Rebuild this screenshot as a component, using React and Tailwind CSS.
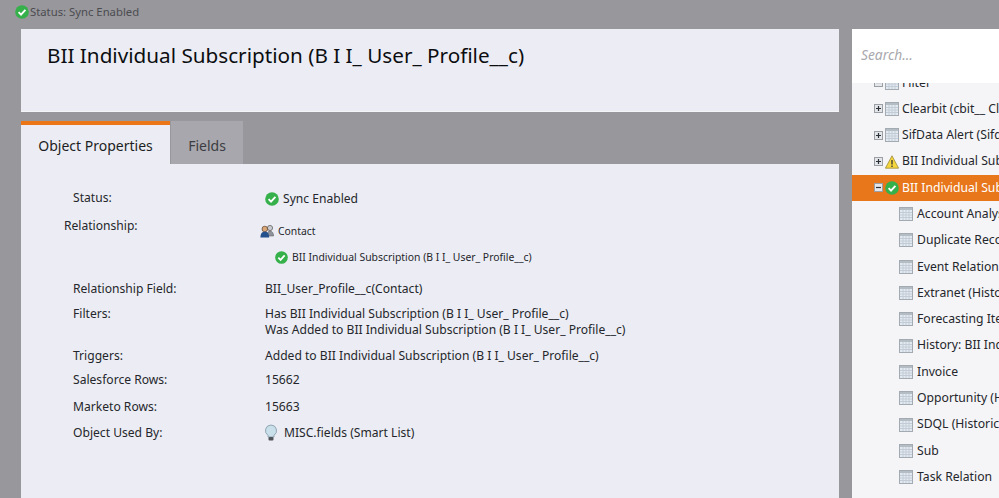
import React from 'react';

const font = { fontFamily: '"Noto Sans", "Open Sans", sans-serif' };

const CheckIcon = ({ size = 14 }) => (
  <svg width={size} height={size} viewBox="0 0 14 14" className="shrink-0">
    <circle cx="7" cy="7" r="6.8" fill="#35b04a" />
    <path d="M3.6 7.2 L6 9.6 L10.4 4.8" fill="none" stroke="#fff" strokeWidth="1.9" />
  </svg>
);

const GridIcon = () => (
  <svg width="14" height="14" viewBox="0 0 14 14" className="shrink-0">
    <rect x="0.5" y="0.5" width="13" height="13" fill="#e3e9f0" stroke="#a3aab2" />
    <rect x="1" y="1" width="12" height="2" fill="#b4bcc4" />
    <path d="M1 5.5H13M1 8H13M1 10.5H13M4 3V13M7 3V13M10 3V13" stroke="#c3ccd6" strokeWidth="1" fill="none" />
  </svg>
);

const Expander = ({ open }) => (
  <svg width="9" height="9" viewBox="0 0 9 9" className="shrink-0">
    <rect x="0.5" y="0.5" width="8" height="8" fill="#e4e6ea" stroke="#9a9ea5" />
    <path d={open ? 'M2 4.5H7' : 'M2 4.5H7M4.5 2V7'} stroke="#2d3138" strokeWidth="1.2" fill="none" />
  </svg>
);

const WarnIcon = () => (
  <svg width="14" height="14" viewBox="0 0 14 14" className="shrink-0">
    <path d="M7 0.8 L13.6 13.2 H0.4 Z" fill="#f5d63d" stroke="#9a8a3a" strokeWidth="0.8" />
    <path d="M7 5V9.5M7 10.5V12" stroke="#333" strokeWidth="1.3" fill="none" />
  </svg>
);

const ContactIcon = () => (
  <svg width="14" height="14" viewBox="0 0 14 14" className="shrink-0">
    <circle cx="10" cy="4" r="2.6" fill="#c9ccd2" stroke="#555" strokeWidth="0.7" />
    <path d="M7 12c0-3 1-5 3-5s3.6 2 3.6 5z" fill="#8f949c" stroke="#555" strokeWidth="0.5" />
    <circle cx="4.8" cy="5" r="2.8" fill="#d9a679" stroke="#5a4128" strokeWidth="0.7" />
    <path d="M0.4 13.5c0-4 1.6-6 4.4-6s4.4 2 4.4 6z" fill="#24508c" />
  </svg>
);

const BulbIcon = () => (
  <svg width="14" height="18" viewBox="0 0 14 18" className="shrink-0">
    <path d="M7 1a5.6 5.6 0 0 0-3 10.3V13h6v-1.7A5.6 5.6 0 0 0 7 1z" fill="#c9dfea" stroke="#7f96a5" strokeWidth="0.8" />
    <rect x="4.5" y="13" width="5" height="3.4" rx="1" fill="#50555b" />
  </svg>
);

const Row = ({ label, className = '', children }) => (
  <div className={`flex ${className}`}>
    <div className="ml-[52px] w-[192px] shrink-0">{label}</div>
    <div>{children}</div>
  </div>
);

const childRows = [
  'Account Analysis',
  'Duplicate Record',
  'Event Relation',
  'Extranet (History)',
  'Forecasting Item',
  'History: BII Individual',
  'Invoice',
  'Opportunity (History)',
  'SDQL (Historical)',
  'Sub',
  'Task Relation',
];

const topRows = [
  { name: 'Clearbit (cbit__ Clearbit__c)', icon: <GridIcon /> },
  { name: 'SifData Alert (Sifdata__c)', icon: <GridIcon /> },
  { name: 'BII Individual Subscription', icon: <WarnIcon /> },
];

export default function App() {
  return (
    <div style={font} className="h-[498px] w-[999px] overflow-hidden bg-[#98979c] text-[13px] text-[#24262b]">
      <div className="flex h-[29px] items-start pl-[15px] pt-[5px]">
        <CheckIcon size={14} />
        <span className="ml-[1px] text-[11.3px] leading-[14px] text-[#4b4c50]">Status: Sync Enabled</span>
      </div>

      <div className="flex">
        <div className="ml-[21px] w-[818px]">
          <div className="h-[83px] border-b border-[#f5f5f8] bg-[#ecedf4] pl-[26px] pt-[11px]">
            <h1 className="text-[20.7px] leading-[30px] text-[#0c0d10]">BII Individual Subscription (B I I_ User_ Profile__c)</h1>
          </div>

          <div className="mt-[9px] flex h-[43px]">
            <div className="flex w-[149px] items-center justify-center border-t-[4px] border-[#ea7617] bg-[#ecedf4] pt-[1px] text-[14px] text-[#1c1e23]">
              Object Properties
            </div>
            <div className="ml-[1px] flex w-[72px] items-center justify-center bg-[#a8a7ad] pt-[5px] text-[14px] text-[#3c3d42]">
              Fields
            </div>
          </div>

          <div className="h-[334px] bg-[#ecedf4] pt-[25px] text-[12.1px] leading-[18px]">
            <Row label="Status:">
              <div className="flex items-center gap-[4px] pt-[1px]">
                <CheckIcon />
                <span>Sync Enabled</span>
              </div>
            </Row>
            <div className="mt-[9px] flex">
              <div className="ml-[43px] w-[196px] shrink-0">Relationship:</div>
              <div className="pt-[5px] text-[10.4px]">
                <div className="flex items-center gap-[4px]">
                  <ContactIcon />
                  <span>Contact</span>
                </div>
                <div className="ml-[15px] mt-[8px] flex items-center gap-[4px]">
                  <CheckIcon size={13} />
                  <span>BII Individual Subscription (B I I_ User_ Profile__c)</span>
                </div>
              </div>
            </div>
            <Row label="Relationship Field:" className="mt-[14px]">BII_User_Profile__c(Contact)</Row>
            <Row label="Filters:" className="mt-[7px]">
              <div>Has BII Individual Subscription (B I I_ User_ Profile__c)</div>
              <div className="-mt-[2px]">Was Added to BII Individual Subscription (B I I_ User_ Profile__c)</div>
            </Row>
            <Row label="Triggers:" className="mt-[8px]">Added to BII Individual Subscription (B I I_ User_ Profile__c)</Row>
            <Row label="Salesforce Rows:" className="mt-[6px]">15662</Row>
            <Row label="Marketo Rows:" className="mt-[9px]">15663</Row>
            <Row label="Object Used By:" className="mt-[8px]">
              <div className="-ml-[1px] flex items-center gap-[6px]">
                <BulbIcon />
                <span>MISC.fields (Smart List)</span>
              </div>
            </Row>
          </div>
        </div>

        <div className="ml-[13px] min-w-0 flex-1 overflow-hidden">
          <div className="flex h-[54px] items-center bg-white pb-[2px] pl-[9px] text-[13.8px] italic text-[#a9a9ad]">Search...</div>
          <div className="h-[415px] overflow-hidden whitespace-nowrap bg-[#f5f5f7] text-[12.2px]">
            <div className="-mt-[13.5px] flex h-[26.3px] items-center pl-[22px]">
              <Expander open />
              <span className="ml-[2px]"><GridIcon /></span>
              <span className="ml-[3px]">Filter</span>
            </div>
            {topRows.map((row) => (
              <div key={row.name} className="flex h-[26.3px] items-center pl-[22px]">
                <Expander />
                <span className="ml-[2px] flex"><span>{row.icon}</span></span>
                <span className="ml-[3px]">{row.name}</span>
              </div>
            ))}
            <div className="flex h-[26.3px] items-center bg-[#e8761a] pl-[22px] text-white">
              <Expander open />
              <span className="ml-[2px] flex"><CheckIcon /></span>
              <span className="ml-[3px]">BII Individual Subscription</span>
            </div>
            {childRows.map((name) => (
              <div key={name} className="flex h-[26.3px] items-center pl-[47px]">
                <GridIcon />
                <span className="ml-[4px]">{name}</span>
              </div>
            ))}
            <div className="flex h-[26.3px] items-end pl-[33px]">
              <GridIcon />
            </div>
          </div>
        </div>
      </div>
    </div>
  );
}
